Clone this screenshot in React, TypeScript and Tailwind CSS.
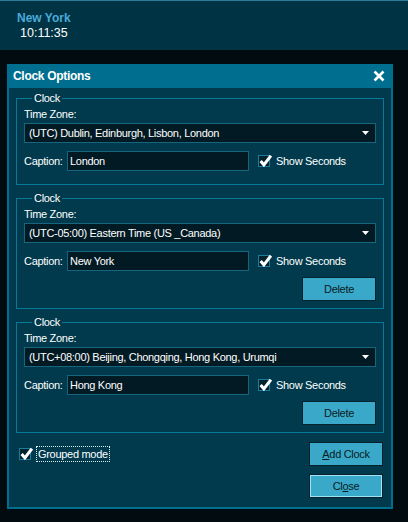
import { useState } from "react"

type ClockCfg = {
    zone: string
    caption: string
    deletable: boolean
}

const clocks: ClockCfg[] = [
    { zone: "(UTC) Dublin, Edinburgh, Lisbon, London", caption: "London", deletable: false },
    { zone: "(UTC-05:00) Eastern Time (US _Canada)", caption: "New York", deletable: true },
    { zone: "(UTC+08:00) Beijing, Chongqing, Hong Kong, Urumqi", caption: "Hong Kong", deletable: true },
]

function Check({ checked }: { checked: boolean }) {
    return (
        <span className="relative flex h-[12px] w-[12px] shrink-0 border border-[#1b7c9c] bg-[#02222e]">
            {checked && (
                <svg viewBox="0 0 12 12" className="absolute -top-[2px] left-0 h-[13px] w-[13px]">
                    <path d="M1.5 6.5 L4.5 10 L11 1.5" fill="none" stroke="#ffffff" strokeWidth="2.8" />
                </svg>
            )}
        </span>
    )
}

function Btn({ children, focused }: { children: React.ReactNode; focused?: boolean }) {
    return (
        <button
            className={
                focused
                    ? "flex h-[24px] w-[74px] items-center justify-center border border-[#06222c] bg-[#3aa8c8] text-[#0a1c24] shadow-[inset_0_0_0_1px_#9fe4f6]"
                    : "flex h-[24px] w-[74px] items-center justify-center border border-[#06222c] bg-[#3aa8c8] text-[#0a1c24]"
            }
        >
            {children}
        </button>
    )
}

function ClockGroup({ cfg }: { cfg: ClockCfg }) {
    const [seconds, setSeconds] = useState(true)
    return (
        <fieldset
            className={
                cfg.deletable
                    ? "border border-[#0b7898] px-[7px] pb-[7px]"
                    : "border border-[#0b7898] px-[7px] pb-[13px]"
            }
        >
            <legend className="ml-[8px] px-[2px] leading-[14px]">Clock</legend>
            <div className="mt-[2px] leading-[14px]">Time Zone:</div>
            <div className="mt-[2px] flex h-[20px] items-center justify-between border border-[#16657e] bg-[#021a23] pl-[4px] pr-[6px]">
                <span>{cfg.zone}</span>
                <svg viewBox="0 0 7 4" className="h-[4px] w-[7px]">
                    <path d="M0 0 H7 L3.5 4 Z" fill="#ffffff" />
                </svg>
            </div>
            <div className="mt-[8px] flex h-[20px] items-center">
                <span className="w-[43px]">Caption:</span>
                <div className="flex h-[20px] w-[182px] items-center border border-[#16657e] bg-[#021a23] pl-[2px]">
                    {cfg.caption}
                </div>
                <label className="ml-[9px] flex items-center gap-[6px]" onClick={() => setSeconds(!seconds)}>
                    <Check checked={seconds} />
                    <span>Show Seconds</span>
                </label>
            </div>
            {cfg.deletable && (
                <div className="mt-[6px] flex justify-end">
                    <Btn>Delete</Btn>
                </div>
            )}
        </fieldset>
    )
}

export default function App() {
    return (
        <div className="flex h-[522px] w-[408px] flex-col bg-[#020b0f] font-['Liberation_Sans',Arial,sans-serif] text-[11px] tracking-[-0.3px] text-white">
            <div className="h-[50px] border-t border-[#2a7f96] bg-[#003344] pl-[17px] pt-[10px] tracking-normal">
                <div className="text-[12px] font-bold leading-[14px] text-[#4aaad8]">New York</div>
                <div className="ml-[3px] text-[12.5px] leading-[16px]">10:11:35</div>
            </div>

            <div className="ml-[7px] mt-[14px] w-[386px] border-2 border-t-0 border-[#006e8e] bg-[#006e8e]">
                <div className="flex h-[24px] items-center justify-between pl-[4px] pr-[6px]">
                    <span className="text-[12px] font-bold">Clock Options</span>
                    <svg viewBox="0 0 12 12" className="h-[12px] w-[12px]">
                        <path d="M1.5 1.5 L10.5 10.5 M10.5 1.5 L1.5 10.5" stroke="#ffffff" strokeWidth="2.6" />
                    </svg>
                </div>
                <div className="flex flex-col bg-[#003a4c] px-[7px] pb-[9px] pt-[3px]">
                    <div className="flex flex-col gap-[6px]">
                        {clocks.map((c) => (
                            <ClockGroup key={c.caption} cfg={c} />
                        ))}
                    </div>
                    <div className="mt-[9px] flex justify-between pr-[1px]">
                        <div className="flex h-[24px] items-center pl-[3px]">
                            <Check checked={true} />
                            <span className="ml-[5px] border border-dotted border-[#d8eef4] px-[1px] leading-[14px]">
                                Grouped mode
                            </span>
                        </div>
                        <div className="flex flex-col gap-[8px]">
                            <Btn>
                                <span>
                                    <u>A</u>dd Clock
                                </span>
                            </Btn>
                            <Btn focused>
                                <span>
                                    Cl<u>o</u>se
                                </span>
                            </Btn>
                        </div>
                    </div>
                </div>
            </div>
        </div>
    )
}
